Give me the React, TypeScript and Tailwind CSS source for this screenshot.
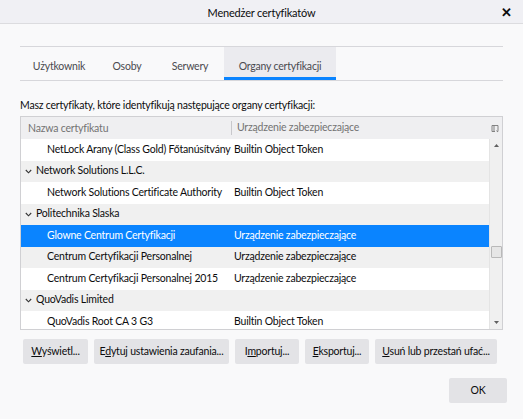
import React from "react";

const font = { fontFamily: 'Lato, "Noto Sans", sans-serif' };

type Row = {
  name: string;
  device?: string;
  group?: boolean;
  selected?: boolean;
};

const rows: Row[] = [
  { name: "NetLock Arany (Class Gold) Főtanúsítvány", device: "Builtin Object Token" },
  { name: "Network Solutions L.L.C.", group: true },
  { name: "Network Solutions Certificate Authority", device: "Builtin Object Token" },
  { name: "Politechnika Slaska", group: true },
  { name: "Glowne Centrum Certyfikacji", device: "Urządzenie zabezpieczające", selected: true },
  { name: "Centrum Certyfikacji Personalnej", device: "Urządzenie zabezpieczające" },
  { name: "Centrum Certyfikacji Personalnej 2015", device: "Urządzenie zabezpieczające" },
  { name: "QuoVadis Limited", group: true },
  { name: "QuoVadis Root CA 3 G3", device: "Builtin Object Token" },
];

const Chevron = () => (
  <svg width="7" height="5" viewBox="0 0 7 5" className="mr-[4px] shrink-0">
    <path d="M0.8 1 L3.5 3.8 L6.2 1" fill="none" stroke="#333" strokeWidth="1.1" />
  </svg>
);

const TreeRow = ({ row, index }: { row: Row; index: number }) => {
  const bg = row.selected ? "bg-[#0a84ff] text-white" : index % 2 === 0 ? "bg-white" : "bg-[#f0f0f0]";
  return (
    <div className={`flex h-[21.5px] shrink-0 items-center ${bg}`}>
      {row.group ? (
        <div className="flex items-center pl-[4px] text-[#0c0c0d]">
          <Chevron />
          <span>{row.name}</span>
        </div>
      ) : (
        <>
          <div className="w-[213px] shrink-0 whitespace-nowrap pl-[26px]">{row.name}</div>
          <div className="whitespace-nowrap">{row.device}</div>
        </>
      )}
    </div>
  );
};

const Btn = ({
  children,
  className = "",
}: {
  children: React.ReactNode;
  className?: string;
}) => (
  <div
    className={`flex h-[25px] items-center justify-center whitespace-nowrap rounded-[2px] bg-[#e3e3e6] text-[#0c0c0d] ${className}`}
  >
    {children}
  </div>
);

export default function App() {
  return (
    <div
      style={font}
      className="flex h-[419px] w-[523px] flex-col bg-[#f9f9fa] text-[10.5px] tracking-[-0.2px] text-[#0c0c0d]"
    >
      {/* title bar */}
      <div className="relative flex h-[24px] items-center justify-center border-b border-[#dcdcdf] bg-[#f0f0f4] pt-[3px]">
        <span className="text-[11px]">Menedżer certyfikatów</span>
        <span className="absolute right-[11px] top-[6px] text-[13px] font-bold leading-none">✕</span>
      </div>

      <div className="flex flex-1 flex-col px-[20px] pt-[22px]">
        {/* tabs */}
        <div className="flex h-[35px] border-y border-[#d7d7db] text-[#4a4a4f]">
          <div className="flex w-[78px] items-center justify-center pt-[6px]">Użytkownik</div>
          <div className="flex w-[58px] items-center justify-center pt-[6px]">Osoby</div>
          <div className="flex w-[68px] items-center justify-center pt-[6px]">Serwery</div>
          <div className="flex w-[112px] items-center justify-center border-b-[3px] border-[#0a84ff] bg-[#ebebef] pt-[9px] text-[#4a4a4f]">
            Organy certyfikacji
          </div>
        </div>

        <div className="mt-[17px] h-[15px] leading-[15px]">
          Masz certyfikaty, które identyfikują następujące organy certyfikacji:
        </div>

        {/* tree */}
        <div className="mt-[3px] flex h-[214px] border border-[#d0d0d3] bg-white">
          <div className="flex min-w-0 flex-1 flex-col">
            <div className="flex h-[22px] shrink-0 items-center bg-[#efeff1] text-[#737373]">
              <div className="w-[211px] shrink-0 border-r border-[#c8c8cc] pl-[7px] leading-[14px]">
                Nazwa certyfikatu
              </div>
              <div className="pl-[5px]">Urządzenie zabezpieczające</div>
            </div>
            <div className="flex min-h-0 flex-1 flex-col overflow-hidden">
              {rows.map((r, i) => (
                <TreeRow row={r} index={i} key={i} />
              ))}
            </div>
          </div>
          {/* scrollbar column */}
          <div className="flex w-[13px] shrink-0 flex-col">
            <div className="flex h-[22px] items-center justify-center bg-[#efeff1]">
              <svg width="9" height="9" viewBox="0 0 9 9">
                <path d="M1 1.5 H7 V6 M1 1.5 V7.5 H4 M3 1.5 V7.5" fill="none" stroke="#777" strokeWidth="0.9" />
                <path d="M5 6.5 L8 6.5 L6.5 8.3 Z" fill="#777" />
              </svg>
            </div>
            <div className="relative flex flex-1 flex-col items-center border-l border-[#e4e4e4] bg-[#f0f0f0]">
              <svg width="7" height="5" viewBox="0 0 7 5" className="mt-[4px]">
                <path d="M3.5 1 L6 4 L1 4 Z" fill="#606060" />
              </svg>
              <div className="absolute left-[1px] right-[0px] top-[107px] h-[12px] rounded-[1px] border border-[#b9b9b9] bg-[#e6e6e6]" />
              <div className="flex-1" />
              <svg width="7" height="5" viewBox="0 0 7 5" className="mb-[4px]">
                <path d="M1 1 L6 1 L3.5 4 Z" fill="#606060" />
              </svg>
            </div>
          </div>
        </div>

        {/* action buttons */}
        <div className="mt-[9px] flex gap-[6px] pl-[3px]">
          <Btn className="w-[65px]">
            <span>
              <u>W</u>yświetl...
            </span>
          </Btn>
          <Btn className="w-[135px] bg-[#d2d2d6]">
            <span>
              E<u>d</u>ytuj ustawienia zaufania...
            </span>
          </Btn>
          <Btn className="w-[64px]">
            <span>
              I<u>m</u>portuj...
            </span>
          </Btn>
          <Btn className="w-[64px]">
            <span>
              <u>E</u>ksportuj...
            </span>
          </Btn>
          <Btn className="w-[122px]">
            <span>
              <u>U</u>suń lub przestań ufać...
            </span>
          </Btn>
        </div>

        <div className="mt-[14px] flex justify-end">
          <Btn className="mr-[-4px] w-[58px]">OK</Btn>
        </div>
      </div>
    </div>
  );
}
